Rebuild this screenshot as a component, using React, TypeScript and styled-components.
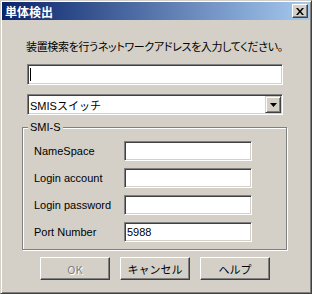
import React from 'react';
import styled, { createGlobalStyle } from 'styled-components';

const GlobalStyle = createGlobalStyle`
  html, body {
    margin: 0;
    padding: 0;
    background: #d4d0c8;
  }
  * {
    box-sizing: border-box;
  }
`;

const FONT = `"Liberation Sans", "Noto Sans CJK JP", sans-serif`;
const FACE = '#d4d0c8';

const Window = styled.div`
  width: 312px;
  height: 294px;
  padding: 1px;
  background: ${FACE};
  border: 1px solid;
  border-color: ${FACE} #404040 #404040 ${FACE};
  box-shadow: inset 1px 1px #fff, inset -1px -1px #808080;
  display: flex;
  flex-direction: column;
  font-family: ${FONT};
  font-size: 11px;
  color: #000;
`;

const TitleBar = styled.div`
  height: 18px;
  display: flex;
  align-items: center;
  justify-content: space-between;
  padding: 0 2px 0 3px;
  background: linear-gradient(to right, #0a246a, #a6caf0);
`;

const Title = styled.span`
  color: #fff;
  font-weight: bold;
  font-size: 12px;
  font-family: "Noto Sans CJK JP", sans-serif;
`;

const CloseButton = styled.div`
  width: 16px;
  height: 14px;
  background: ${FACE};
  border: 1px solid;
  border-color: #fff #404040 #404040 #fff;
  box-shadow: inset -1px -1px #808080;
  display: flex;
  align-items: center;
  justify-content: center;
`;

const Content = styled.div`
  display: flex;
  flex-direction: column;
  padding: 0 21px 0 25px;
`;

const Prompt = styled.div`
  margin-top: 19px;
  margin-left: -1px;
  height: 14px;
  line-height: 14px;
  font-family: "Noto Sans CJK JP", sans-serif;
  font-size: 11px;
  font-feature-settings: "palt";
  letter-spacing: -0.35px;
  white-space: nowrap;
`;

const Field = styled.div`
  height: 21px;
  width: 100%;
  background: #fff;
  border: 1px solid;
  border-color: #808080 #fff #fff #808080;
  box-shadow: inset 1px 1px #404040, inset -1px -1px ${FACE};
  display: flex;
  align-items: center;
  padding: 0 2px;
  font-size: 11px;
  white-space: nowrap;
`;

const Caret = styled.span`
  width: 1px;
  height: 13px;
  background: #000;
`;

const AddressField = styled(Field)`
  margin-top: 11px;
  width: 256px;
`;

const SelectBox = styled(Field)`
  margin-top: 9px;
  width: 256px;
  justify-content: space-between;
`;

const DropButton = styled.div`
  width: 16px;
  height: 17px;
  background: ${FACE};
  border: 1px solid;
  border-color: ${FACE} #404040 #404040 ${FACE};
  box-shadow: inset 1px 1px #fff, inset -1px -1px #808080;
  display: flex;
  align-items: center;
  justify-content: center;
  margin-right: -1px;
`;

const GroupBox = styled.fieldset`
  margin: 6px 0 0 -5px;
  width: 265px;
  height: 129px;
  padding: 8px 0 0 11px;
  border: 1px solid #808080;
  box-shadow: inset 1px 1px #fff, 1px 1px #fff;
  display: flex;
  flex-direction: column;
  gap: 7px;
`;

const Legend = styled.legend`
  margin-left: -6px;
  padding: 0 2px;
  line-height: 12px;
  background: ${FACE};
  font-size: 11px;
`;

const Row = styled.div`
  display: flex;
  align-items: center;
  height: 20px;
`;

const RowLabel = styled.span`
  width: 90px;
`;

const RowField = styled(Field)`
  height: 20px;
  width: 128px;
`;

const ButtonBar = styled.div`
  display: flex;
  gap: 10px;
  margin-top: 7px;
  padding-left: 13px;
`;

const Button = styled.div<{ $disabled?: boolean }>`
  width: 70px;
  height: 23px;
  display: flex;
  align-items: center;
  justify-content: center;
  background: ${FACE};
  border: 1px solid;
  border-color: #fff #404040 #404040 #fff;
  box-shadow: inset -1px -1px #808080;
  font-family: "Noto Sans CJK JP", sans-serif;
  font-size: 11px;
  color: ${p => (p.$disabled ? '#808080' : '#000')};
  text-shadow: ${p => (p.$disabled ? '1px 1px #fff' : 'none')};
`;

const rows = [
  { label: 'NameSpace', value: '' },
  { label: 'Login account', value: '' },
  { label: 'Login password', value: '' },
  { label: 'Port Number', value: '5988' },
];

export default function App() {
  return (
    <>
      <GlobalStyle />
      <Window>
        <TitleBar>
          <Title>単体検出</Title>
          <CloseButton>
            <svg width="8" height="7" viewBox="0 0 8 7">
              <path d="M0 0h2l2 2.5L6 0h2L5 3.5 8 7H6L4 4.5 2 7H0l3-3.5z" fill="#000" />
            </svg>
          </CloseButton>
        </TitleBar>
        <Content>
          <Prompt>装置検索を行うネットワークアドレスを入力してください。</Prompt>
          <AddressField>
            <Caret />
          </AddressField>
          <SelectBox>
            <span>SMISスイッチ</span>
            <DropButton>
              <svg width="7" height="4" viewBox="0 0 7 4">
                <path d="M0 0h7L3.5 4z" fill="#000" />
              </svg>
            </DropButton>
          </SelectBox>
          <GroupBox>
            <Legend>SMI-S</Legend>
            {rows.map(r => (
              <Row key={r.label}>
                <RowLabel>{r.label}</RowLabel>
                <RowField>{r.value}</RowField>
              </Row>
            ))}
          </GroupBox>
          <ButtonBar>
            <Button $disabled>OK</Button>
            <Button>キャンセル</Button>
            <Button>ヘルプ</Button>
          </ButtonBar>
        </Content>
      </Window>
    </>
  );
}
